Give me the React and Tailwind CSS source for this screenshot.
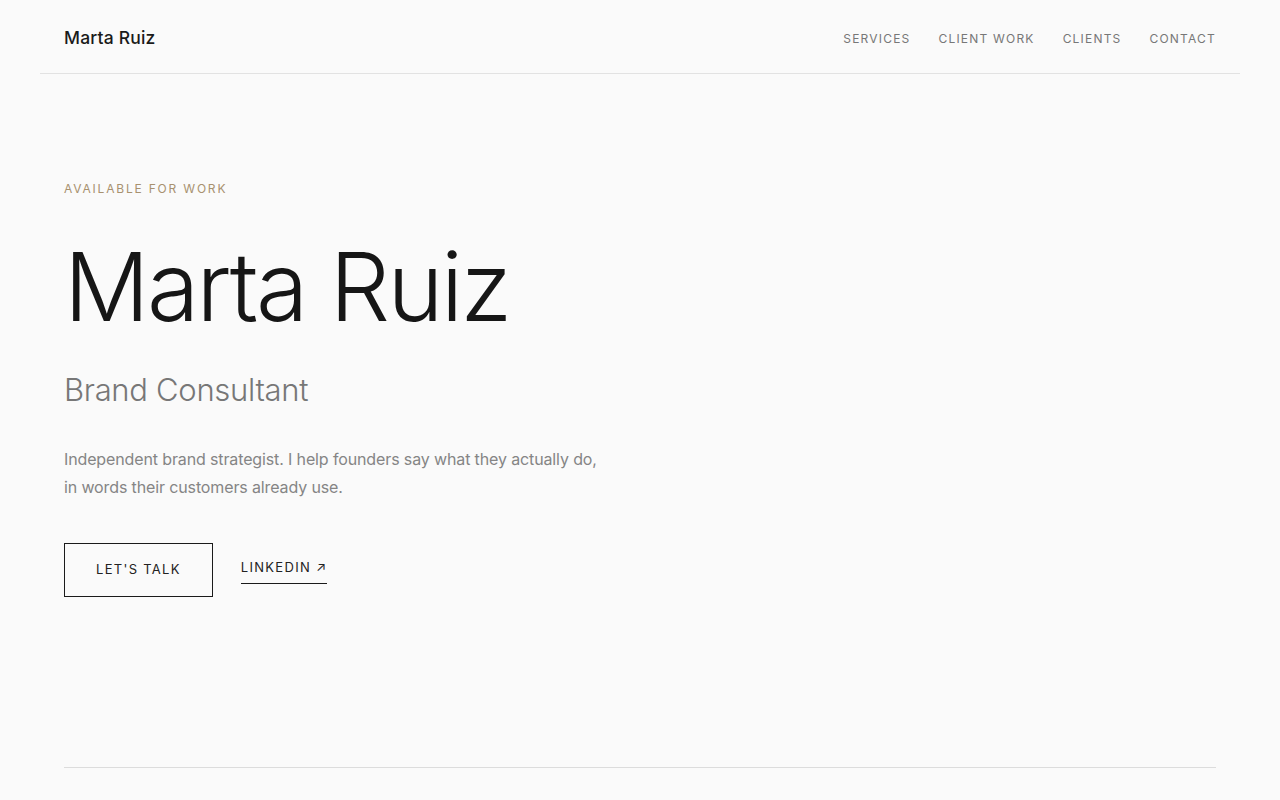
export default function App() {
  const font = { fontFamily: 'Inter, "Noto Sans", sans-serif' };
  return (
    <div className="min-h-[800px] bg-[#fafafa] text-[#1a1a1a]" style={font}>
      <header className="mx-10 flex h-[74px] items-center justify-between border-b border-[#e2e2e2] px-6">
        <div className="pt-[4px] text-[17.5px] font-medium tracking-[0.01em] text-[#1a1a1a]">Marta Ruiz</div>
        <nav className="flex items-center gap-7 pt-[4px] text-[12px] uppercase tracking-[0.1em] text-[#777]">
          <a>Services</a>
          <a>Client Work</a>
          <a>Clients</a>
          <a>Contact</a>
        </nav>
      </header>
      <main className="px-16">
        <section className="pt-[107px]">
          <p className="text-[12px] leading-4 uppercase tracking-[0.15em] text-[#a8916f]">Available for work</p>
          <h1 className="mt-[42px] text-[95px] leading-none font-light tracking-[-0.027em] text-[#161616]">Marta Ruiz</h1>
          <h2 className="mt-[37px] text-[31px] leading-[1.2] font-light tracking-[-0.01em] text-[#777]">Brand Consultant</h2>
          <p className="mt-[37px] max-w-[545px] text-[16px] leading-7 tracking-[-0.008em] text-[#858585]">
            Independent brand strategist. I help founders say what they actually do, in words their customers already use.
          </p>
          <div className="mt-[42px] flex items-center gap-7">
            <a className="flex h-[54px] items-center border border-[#1a1a1a] px-[31px] text-[13px] uppercase tracking-[0.1em] text-[#222]">Let's Talk</a>
            <a className="mt-[2px] border-b border-[#1a1a1a] pb-[6px] text-[13px] uppercase tracking-[0.1em] text-[#222]">LinkedIn ↗</a>
          </div>
        </section>
        <div className="mt-[170px] border-t border-[#dcdcdc]"></div>
      </main>
    </div>
  );
}
